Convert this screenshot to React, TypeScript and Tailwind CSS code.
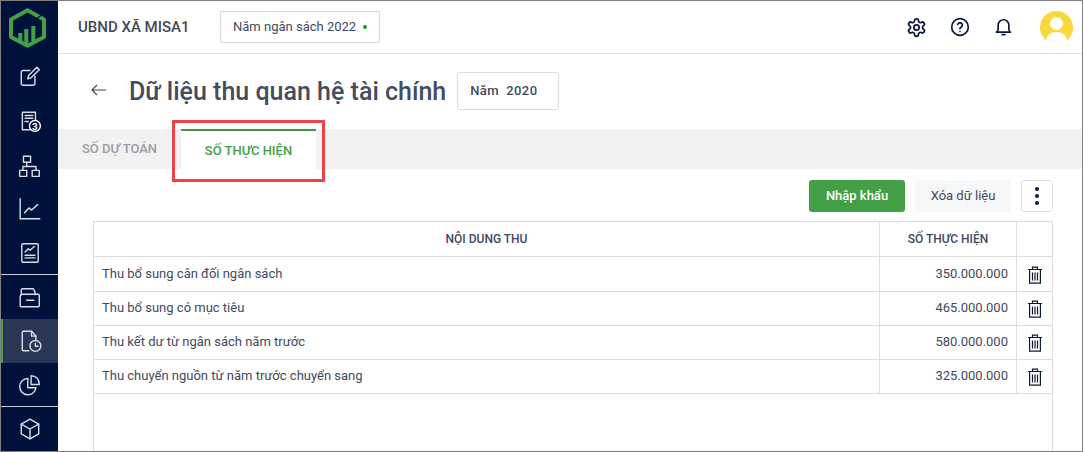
import React from "react";

const S = { stroke: "#d8dce6", fill: "none", strokeWidth: 1.3, strokeLinecap: "round" as const, strokeLinejoin: "round" as const };

function Logo() {
  return (
    <svg width="37" height="40" viewBox="0 0 37 40" fill="none" className="mr-[4px]">
      <path d="M18.500 2.300 35 11.500V29L18.500 37.700 2 29V11.500Z" stroke="#43a047" strokeWidth="4" strokeLinejoin="round" fill="none" />
      <path d="M11.300 25V34M17.300 21V36M24.300 18V33" stroke="#43a047" strokeWidth="4" />
      <path d="M7 22 15 18 19 17 34 6" stroke="#00123c" strokeWidth="1.100" />
    </svg>
  );
}

function Ico({ children }: { children: React.ReactNode }) {
  return <svg width="24" height="24" viewBox="0 0 22 22" {...S}>{children}</svg>;
}

const NavBtn = ({ h, active, children, line }: { h: string; active?: boolean; line?: boolean; children: React.ReactNode }) => (
  <div className={`${h} flex items-center justify-center ${active ? "bg-[#2a3655] border-l-2 border-[#43a047]" : ""} ${line ? "border-b border-[#c8ccd4]" : ""}`}>
    {children}
  </div>
);

const rows = [
  ["Thu bổ sung cân đối ngân sách", "350.000.000"],
  ["Thu bổ sung có mục tiêu", "465.000.000"],
  ["Thu kết dư từ ngân sách năm trước", "580.000.000"],
  ["Thu chuyển nguồn từ năm trước chuyển sang", "325.000.000"],
];

function Trash() {
  return (
    <svg width="16" height="18" viewBox="0 0 16 18" fill="none" stroke="#0c1a3a" strokeWidth="1.200" className="mt-[1px]">
      <path d="M1 3.500h14M5.500 3.500V1.200h5v2.300M2.600 3.500v13.600h10.800V3.500" />
      <path d="M5.500 6.500v8M8 6.500v8M10.500 6.500v8" />
    </svg>
  );
}

export default function App() {
  return (
    <div className="relative flex w-[1083px] h-[452px] overflow-hidden bg-white border border-[#808080] font-['Roboto',sans-serif] text-[#3b4252]">
      <aside className="w-[57px] shrink-0 bg-[#00123c] flex flex-col">
        <div className="h-[53px] flex items-center justify-center"><Logo /></div>
        <NavBtn h="h-[44px]"><Ico><path d="M15.500 11v7a1.500 1.500 0 0 1-1.500 1.500H4.500A1.500 1.500 0 0 1 3 18V7.500A1.500 1.500 0 0 1 4.500 6H11" /><path d="M9 13.500l.8-3 7.500-7.500 2.200 2.200-7.500 7.500Z" /></Ico></NavBtn>
        <NavBtn h="h-[46px]"><Ico><path d="M11 19H4V3h12v7" /><path d="M6.500 6h7M6.500 8.500h7M6.500 11.500h3" /><circle cx="15.500" cy="15.500" r="5" stroke="#fff" /><text x="15.500" y="18.800" fontSize="9" fontWeight="700" fill="#fff" stroke="none" textAnchor="middle" fontFamily="Roboto">3</text></Ico></NavBtn>
        <NavBtn h="h-[43px]"><Ico><rect x="5" y="2" width="6.500" height="5.500" /><rect x="1.500" y="15" width="6.500" height="5.500" /><rect x="13" y="15" width="6.500" height="5.500" /><path d="M8 7.500v4M4.500 15v-3.500h12V15" /></Ico></NavBtn>
        <NavBtn h="h-[44px]"><Ico><path d="M2 1.500v18.500h18" /><path d="M6 14.500 10 10l2.500 2 5.500-5" /></Ico></NavBtn>
        <NavBtn h="h-[44px]" line><Ico><rect x="3.500" y="2.500" width="15" height="17" rx="1" /><path d="M6.500 10l3-3 1.500 1.500 4-3.500M6.500 13h9M6.500 15.500h9" /></Ico></NavBtn>
        <NavBtn h="h-[44px]"><Ico><path d="M3 9V4.500a1 1 0 0 1 1-1h10l1.500 2.500V9" /><path d="M2 10.500a2 2 0 0 1 2-2h14.500a1 1 0 0 1 1 1V19a1 1 0 0 1-1 1H3a1 1 0 0 1-1-1Z" /><path d="M8 14h6.500" /></Ico></NavBtn>
        <NavBtn h="h-[44px]" active><Ico><path d="M9 20H4a1 1 0 0 1-1-1V3a1 1 0 0 1 1-1h7.500l4 4.500V10" /><path d="M11.500 2v4.500h4" /><circle cx="15" cy="15.500" r="5" /><path d="M15 13v2.800h2.500" /></Ico></NavBtn>
        <NavBtn h="h-[44px]" line><Ico><path d="M16.500 13.500A7.500 7.500 0 1 1 9 5V13.500Z" /><path d="M12 2.500a7.500 7.500 0 0 1 7.500 8H12Z" /></Ico></NavBtn>
        <NavBtn h="h-[44px]"><Ico><path d="M11 2 19 6.500v9L11 20l-8-4.500v-9Z" /><path d="M3 6.500 11 11l8-4.500M11 11v9" /></Ico></NavBtn>
      </aside>

      <main className="flex-1 min-w-0 flex flex-col">
        <header className="h-[53px] shrink-0 border-b border-[#e0e0e0] flex items-center pl-[20px] pr-[9px]">
          <span className="text-[15px] font-medium text-[#3f4a5e] w-[142px] leading-none whitespace-nowrap">UBND XÃ MISA1</span>
          <div className="h-[32px] w-[160px] border border-[#dedede] flex items-center pl-[12px] text-[13px] text-[#3f4a5e] whitespace-nowrap">
            Năm ngân sách 2022
            <span className="ml-[7px] size-[4px] rounded-full bg-[#13a10e]" />
          </div>
          <div className="ml-auto flex items-center">
            <svg className="mr-[23px]" width="21" height="21" viewBox="0 0 24 24" fill="none" stroke="#0c1a3a" strokeWidth="2" strokeLinecap="round" strokeLinejoin="round"><path d="M12.220 2h-.440a2 2 0 0 0-2 2v.180a2 2 0 0 1-1 1.730l-.430.250a2 2 0 0 1-2 0l-.150-.080a2 2 0 0 0-2.730.730l-.220.380a2 2 0 0 0 .730 2.730l.150.100a2 2 0 0 1 1 1.720v.510a2 2 0 0 1-1 1.740l-.150.090a2 2 0 0 0-.730 2.730l.220.380a2 2 0 0 0 2.730.730l.150-.080a2 2 0 0 1 2 0l.430.250a2 2 0 0 1 1 1.730V20a2 2 0 0 0 2 2h.440a2 2 0 0 0 2-2v-.180a2 2 0 0 1 1-1.730l.430-.250a2 2 0 0 1 2 0l.150.080a2 2 0 0 0 2.730-.730l.220-.390a2 2 0 0 0-.730-2.730l-.150-.080a2 2 0 0 1-1-1.740v-.500a2 2 0 0 1 1-1.740l.150-.090a2 2 0 0 0 .730-2.730l-.220-.380a2 2 0 0 0-2.730-.730l-.150.080a2 2 0 0 1-2 0l-.430-.250a2 2 0 0 1-1-1.730V4a2 2 0 0 0-2-2z" /><circle cx="12" cy="12" r="3" /></svg>
            <svg className="mr-[25px]" width="20" height="20" viewBox="0 0 24 24" fill="none" stroke="#0c1a3a" strokeWidth="2" strokeLinecap="round" strokeLinejoin="round"><circle cx="12" cy="12" r="10" /><path d="M9.100 9a3 3 0 0 1 5.800 1c0 2-3 2.500-3 4" /><path d="M12 17.500h.01" /></svg>
            <svg className="mr-[28px] mb-[1px]" width="17" height="20" viewBox="0 0 18 20" fill="none" stroke="#0c1a3a" strokeWidth="1.800" strokeLinecap="round" strokeLinejoin="round"><path d="M1.500 15.500c1.200-.6 1.800-1.500 1.800-3V8a5.700 5.700 0 0 1 11.400 0v4.500c0 1.500.6 2.400 1.800 3Z" /><path d="M7.500 18h3" /></svg>
            <div className="relative size-[33px] rounded-full bg-[#f8d73f] overflow-hidden">
              <div className="absolute left-[10px] top-[6px] size-[13px] rounded-full bg-white" />
              <div className="absolute left-[6px] top-[21px] w-[21px] h-[18px] rounded-full bg-white" />
            </div>
          </div>
        </header>

        <div className="h-[75px] shrink-0 flex items-center pl-[33px]">
          <svg width="16" height="12" viewBox="0 0 16 12" fill="none" stroke="#3b4252" strokeWidth="1.100" className="mb-[4px]"><path d="M15 6H1M6 1 1 6l5 5" /></svg>
          <h1 className="ml-[22px] text-[25px] font-medium text-[#444d5e] leading-none whitespace-nowrap">Dữ liệu thu quan hệ tài chính</h1>
          <div className="ml-[11px] mb-[2px] h-[38px] w-[102px] border border-[#dcdcdc] rounded-[3px] flex items-center pl-[12px] text-[13px] font-medium tracking-[0.4px] text-[#3f4a5e] whitespace-nowrap">Năm&nbsp;&nbsp;2020</div>
        </div>

        <div className="h-[40px] shrink-0 bg-[#f2f2f2] flex">
          <div className="w-[123px] pl-[24px] pt-[12px] text-[13px] font-medium text-[#9a9ea8] leading-[16px]">SỐ DỰ TOÁN</div>
          <div className="w-[135px] bg-white border-t-2 border-[#43963f] text-center pt-[12px] text-[13px] font-medium text-[#43a047] leading-[16px]">SỐ THỰC HIỆN</div>
        </div>

        <div className="flex justify-end items-start pt-[11px] pr-[29px] h-[52px] shrink-0">
          <button className="h-[32px] w-[96px] rounded-[3px] bg-[#43a047] text-white text-[13px] font-medium">Nhập khẩu</button>
          <button className="ml-[10px] h-[32px] w-[96px] rounded-[3px] bg-[#f6f7f9] text-[13px] text-[#3f4a5e]">Xóa dữ liệu</button>
          <button className="ml-[10px] h-[32px] w-[32px] rounded-[3px] border border-[#e0e0e0] flex flex-col items-center justify-center gap-[3px]">
            <span className="size-[4px] rounded-full bg-[#0c1a3a]" />
            <span className="size-[4px] rounded-full bg-[#0c1a3a]" />
            <span className="size-[4px] rounded-full bg-[#0c1a3a]" />
          </button>
        </div>

        <div className="ml-[35px] mr-[29px] flex-1 border-l border-r border-t border-[#dedede] min-h-0 text-[13px]">
          <div className="flex h-[35px] border-b border-[#dedede] text-[12px] font-medium text-[#3f4a5e]">
            <div className="flex-1 flex items-center justify-center">NỘI DUNG THU</div>
            <div className="w-[137px] border-l border-[#dedede] flex items-center justify-center">SỐ THỰC HIỆN</div>
            <div className="w-[36px] border-l border-[#dedede]" />
          </div>
          {rows.map(([a, b], i) => (
            <div key={a} className={`flex ${i === 0 ? "h-[35px]" : "h-[34px]"} border-b border-[#dedede] text-[#3f4a5e]`}>
              <div className={`flex-1 flex items-center pl-[8px] ${i === 0 ? "" : "pb-[2px]"}`}>{a}</div>
              <div className={`w-[137px] border-l border-[#dedede] flex items-center justify-end pr-[8px] ${i === 0 ? "" : "pb-[2px]"}`}>{b}</div>
              <div className={`w-[36px] border-l border-[#dedede] flex items-center justify-center ${i === 0 ? "" : "pb-[1px]"}`}><Trash /></div>
            </div>
          ))}
        </div>
      </main>

      <div className="absolute left-[171px] top-[119px] w-[153px] h-[62px] border-[3px] border-[#ef4444] pointer-events-none" />
    </div>
  );
}
